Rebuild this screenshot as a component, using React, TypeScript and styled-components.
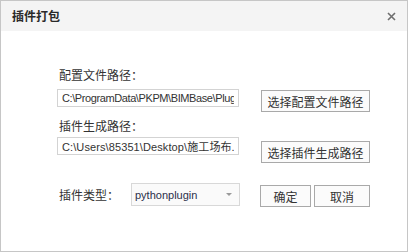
import React from 'react';
import { styled, createGlobalStyle } from 'styled-components';

const GlobalStyle = createGlobalStyle`
  html, body {
    margin: 0;
    padding: 0;
    background: #ffffff;
  }
  body {
    font-family: 'Liberation Sans', 'Noto Sans CJK SC', sans-serif;
    color: #333333;
  }
  * {
    box-sizing: border-box;
  }
`;

const CN = `'Noto Sans CJK SC', sans-serif`;
const LATIN = `'Liberation Sans', 'Noto Sans CJK SC', sans-serif`;

function App() {
  return (
    <>
      <GlobalStyle />
      <Dialog>
        <Header>
          <Title>插件打包</Title>
          <CloseButton aria-label="关闭">
            <svg width="9" height="9" viewBox="0 0 9 9">
              <path d="M1 1 L8 8 M8 1 L1 8" stroke="#6e6e6e" strokeWidth="1.6" />
            </svg>
          </CloseButton>
        </Header>
        <Body>
          <Label $top={36}>配置文件路径：</Label>
          <Row $top={6}>
            <PathInput $tracking={-0.4} readOnly value="C:\ProgramData\PKPM\BIMBase\Plugins\python" />
            <Button $width={109} $offset={1}>选择配置文件路径</Button>
          </Row>
          <Label $top={6}>插件生成路径：</Label>
          <Row $top={3}>
            <PathInput $tracking={0.1} readOnly value="C:\Users\85351\Desktop\施工场布.zip" />
            <Button $width={109} $offset={4}>选择插件生成路径</Button>
          </Row>
          <TypeRow>
            <TypeLabel>插件类型：</TypeLabel>
            <Select>
              <SelectText>pythonplugin</SelectText>
              <Caret />
            </Select>
            <Actions>
              <Button $width={51} $offset={2}>确定</Button>
              <Button $width={56} $offset={2}>取消</Button>
            </Actions>
          </TypeRow>
        </Body>
      </Dialog>
    </>
  );
}

export default App;

const Dialog = styled.div`
  width: 408px;
  height: 252px;
  border: 1px solid #c6c6c6;
  background: #ffffff;
  display: flex;
  flex-direction: column;
`;

const Header = styled.div`
  height: 30px;
  background: #f4f4f4;
  display: flex;
  align-items: center;
  justify-content: space-between;
  padding: 0 11px 0 11px;
`;

const Title = styled.div`
  font-family: ${CN};
  font-size: 12px;
  font-weight: 700;
  color: #2a2a2a;
  line-height: 16px;
`;

const CloseButton = styled.div`
  width: 9px;
  height: 9px;
  display: flex;
  margin-top: 1px;
`;

const Body = styled.div`
  display: flex;
  flex-direction: column;
  padding-left: 56px;
`;

const Label = styled.div<{ $top: number }>`
  margin-top: ${(p) => p.$top}px;
  padding-left: 2px;
  font-family: ${CN};
  font-size: 12px;
  line-height: 16px;
  color: #333333;
`;

const Row = styled.div<{ $top: number }>`
  margin-top: ${(p) => p.$top}px;
  display: flex;
  align-items: flex-start;
  gap: 22px;
`;

const PathInput = styled.input<{ $tracking: number }>`
  width: 182px;
  height: 18px;
  border: 1px solid #d3d3d3;
  background: #ffffff;
  padding: 0 4px;
  font-family: ${LATIN};
  font-size: 11px;
  letter-spacing: ${(p) => p.$tracking}px;
  color: #333333;
  outline: none;
`;

const Button = styled.div<{ $width: number; $offset: number }>`
  width: ${(p) => p.$width}px;
  height: 22px;
  margin-top: ${(p) => p.$offset}px;
  border: 1px solid #a9a9a9;
  background: #fbfbfb;
  display: flex;
  align-items: center;
  justify-content: center;
  font-family: ${CN};
  font-size: 12px;
  color: #333333;
`;

const TypeRow = styled.div`
  margin-top: 20px;
  display: flex;
  align-items: flex-start;
`;

const TypeLabel = styled.div`
  width: 74px;
  height: 23px;
  padding-left: 2px;
  display: flex;
  align-items: center;
  font-family: ${CN};
  font-size: 12px;
  color: #333333;
`;

const Select = styled.div`
  width: 109px;
  height: 23px;
  border: 1px solid #d8d8d8;
  background: #fafafa;
  display: flex;
  align-items: center;
  justify-content: space-between;
  padding: 0 7px 0 3px;
`;

const SelectText = styled.span`
  font-family: ${LATIN};
  font-size: 11px;
  color: #2b2f4a;
`;

const Caret = styled.span`
  width: 0;
  height: 0;
  border-left: 3px solid transparent;
  border-right: 3px solid transparent;
  border-top: 3px solid #9a9a9a;
`;

const Actions = styled.div`
  margin-left: 20px;
  display: flex;
  gap: 3px;
`;
